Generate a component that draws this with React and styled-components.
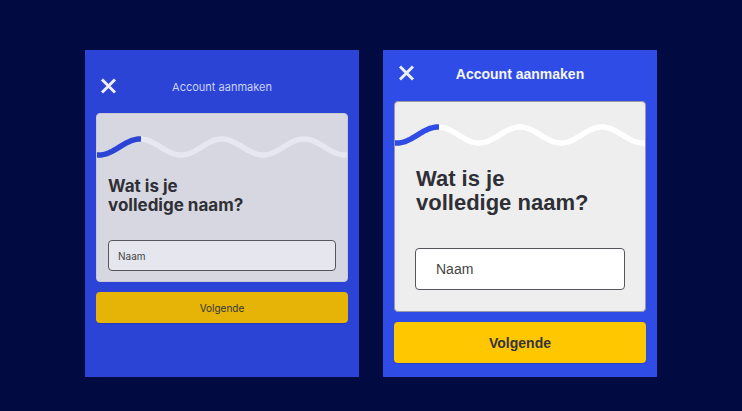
import styled, { createGlobalStyle } from "styled-components";

const GlobalStyle = createGlobalStyle`
  html, body {
    margin: 0;
    padding: 0;
    background: #010b42;
  }
`;

const themes = {
  draft: {
    panel: "#2b44d6",
    card: "#d6d7e0",
    cardBorder: "#c8cad8",
    wave: "#e6e7ef",
    input: "#e6e7ee",
    button: "#e5b406",
    font: "Inter, 'Noto Sans', sans-serif",
    titleColor: "#cdd2f6",
    titleSize: "11px",
    titleWeight: 400,
    headerPad: "28px 15px 0",
    headerGap: "19px",
    iconSize: 17,
    headingSize: "17px",
    headingLine: "19px",
    headingTop: "17px",
    headingLeft: "11px",
    inputTop: "25px",
    inputSide: "11px",
    cardBottom: "10px",
    inputHeight: "31px",
    inputText: "10px",
    inputPad: "9px",
    buttonHeight: "31px",
    buttonGap: "10px",
    buttonText: "10px",
    buttonWeight: 400,
  },
  final: {
    panel: "#2f4ce6",
    card: "#eeeeee",
    cardBorder: "#9a9aa4",
    wave: "#ffffff",
    input: "#ffffff",
    button: "#ffc700",
    font: "'Liberation Sans', Arial, sans-serif",
    titleColor: "#f4f5ff",
    titleSize: "14px",
    titleWeight: 700,
    headerPad: "15px 15px 0",
    headerGap: "20px",
    iconSize: 17,
    headingSize: "22px",
    headingLine: "24px",
    headingTop: "19px",
    headingLeft: "21px",
    inputTop: "33px",
    inputSide: "20px",
    cardBottom: "21px",
    inputHeight: "42px",
    inputText: "14px",
    inputPad: "20px",
    buttonHeight: "41px",
    buttonGap: "10px",
    buttonText: "14px",
    buttonWeight: 700,
  },
};

const Stage = styled.div`
  display: flex;
  justify-content: center;
  gap: 24px;
  padding-top: 50px;
`;

const Panel = styled.section`
  width: 274px;
  height: 327px;
  box-sizing: border-box;
  padding: 0 11px;
  background: ${(p) => p.$t.panel};
  font-family: ${(p) => p.$t.font};
`;

const Header = styled.header`
  display: grid;
  grid-template-columns: 1fr auto 1fr;
  align-items: center;
  padding: ${(p) => p.$t.headerPad};
  margin: 0 -11px ${(p) => p.$t.headerGap};
`;

const Close = styled.button`
  justify-self: start;
  display: flex;
  padding: 0;
  border: none;
  background: none;
`;

const Title = styled.h1`
  margin: 0;
  font-size: ${(p) => p.$t.titleSize};
  font-weight: ${(p) => p.$t.titleWeight};
  color: ${(p) => p.$t.titleColor};
  line-height: 16px;
  transform: translateY(1px);
`;

const Card = styled.div`
  overflow: hidden;
  background: ${(p) => p.$t.card};
  border: 1px solid ${(p) => p.$t.cardBorder};
  border-radius: 4px;
  box-sizing: border-box;
  padding-bottom: ${(p) => p.$t.cardBottom};
`;

const WaveSvg = styled.svg`
  display: block;
  margin: 20px -1px 0;
`;

const Heading = styled.h2`
  margin: ${(p) => p.$t.headingTop} 0 0 ${(p) => p.$t.headingLeft};
  font-size: ${(p) => p.$t.headingSize};
  line-height: ${(p) => p.$t.headingLine};
  font-weight: 700;
  color: #2f2f36;
`;

const Input = styled.input`
  display: block;
  box-sizing: border-box;
  width: calc(100% - 2 * ${(p) => p.$t.inputSide});
  height: ${(p) => p.$t.inputHeight};
  margin: ${(p) => p.$t.inputTop} ${(p) => p.$t.inputSide} 0;
  padding: 0 ${(p) => p.$t.inputPad};
  border: 1px solid #55565c;
  border-radius: 4px;
  background: ${(p) => p.$t.input};
  font-family: inherit;
  font-size: ${(p) => p.$t.inputText};
  color: #333;
  outline: none;
  &::placeholder {
    color: #444;
  }
`;

const NextButton = styled.button`
  display: block;
  width: 100%;
  height: ${(p) => p.$t.buttonHeight};
  margin-top: ${(p) => p.$t.buttonGap};
  border: none;
  border-radius: 4px;
  background: ${(p) => p.$t.button};
  font-family: inherit;
  font-size: ${(p) => p.$t.buttonText};
  font-weight: ${(p) => p.$t.buttonWeight};
  color: #34343a;
  box-shadow: 0 1px 1px rgba(0, 0, 0, 0.15);
`;

const CloseIcon = ({ size, color }) => (
  <svg width={size} height={size - 1} viewBox="0 0 17 16">
    <path d="M2 1.5 L15 14.5 M15 1.5 L2 14.5" stroke={color} strokeWidth="3" />
  </svg>
);

const W = 254;
const H = 26;
const wavePoints = (from, to) => {
  const pts = [];
  for (let x = from; x <= to; x += 1) {
    const y = H / 2 - 8 * Math.cos((2 * Math.PI * (x - 44)) / 82);
    pts.push(`${x},${y.toFixed(2)}`);
  }
  return "M" + pts.join(" L");
};

const Wave = ({ t }) => (
  <WaveSvg width={W} height={H} viewBox={`0 0 ${W} ${H}`}>
    <path d={wavePoints(44, W)} fill="none" stroke={t.wave} strokeWidth="5.5" />
    <path d={wavePoints(0, 45)} fill="none" stroke={t.panel} strokeWidth="5.5" />
  </WaveSvg>
);

const Screen = ({ variant }) => {
  const t = themes[variant];
  return (
    <Panel $t={t}>
      <Header $t={t}>
        <Close aria-label="Sluiten">
          <CloseIcon size={t.iconSize} color="#eceefb" />
        </Close>
        <Title $t={t}>Account aanmaken</Title>
      </Header>
      <Card $t={t}>
        <Wave t={t} />
        <Heading $t={t}>
          Wat is je
          <br />
          volledige naam?
        </Heading>
        <Input $t={t} placeholder="Naam" />
      </Card>
      <NextButton $t={t}>Volgende</NextButton>
    </Panel>
  );
};

export default function App() {
  return (
    <>
      <GlobalStyle />
      <Stage>
        <Screen variant="draft" />
        <Screen variant="final" />
      </Stage>
    </>
  );
}
